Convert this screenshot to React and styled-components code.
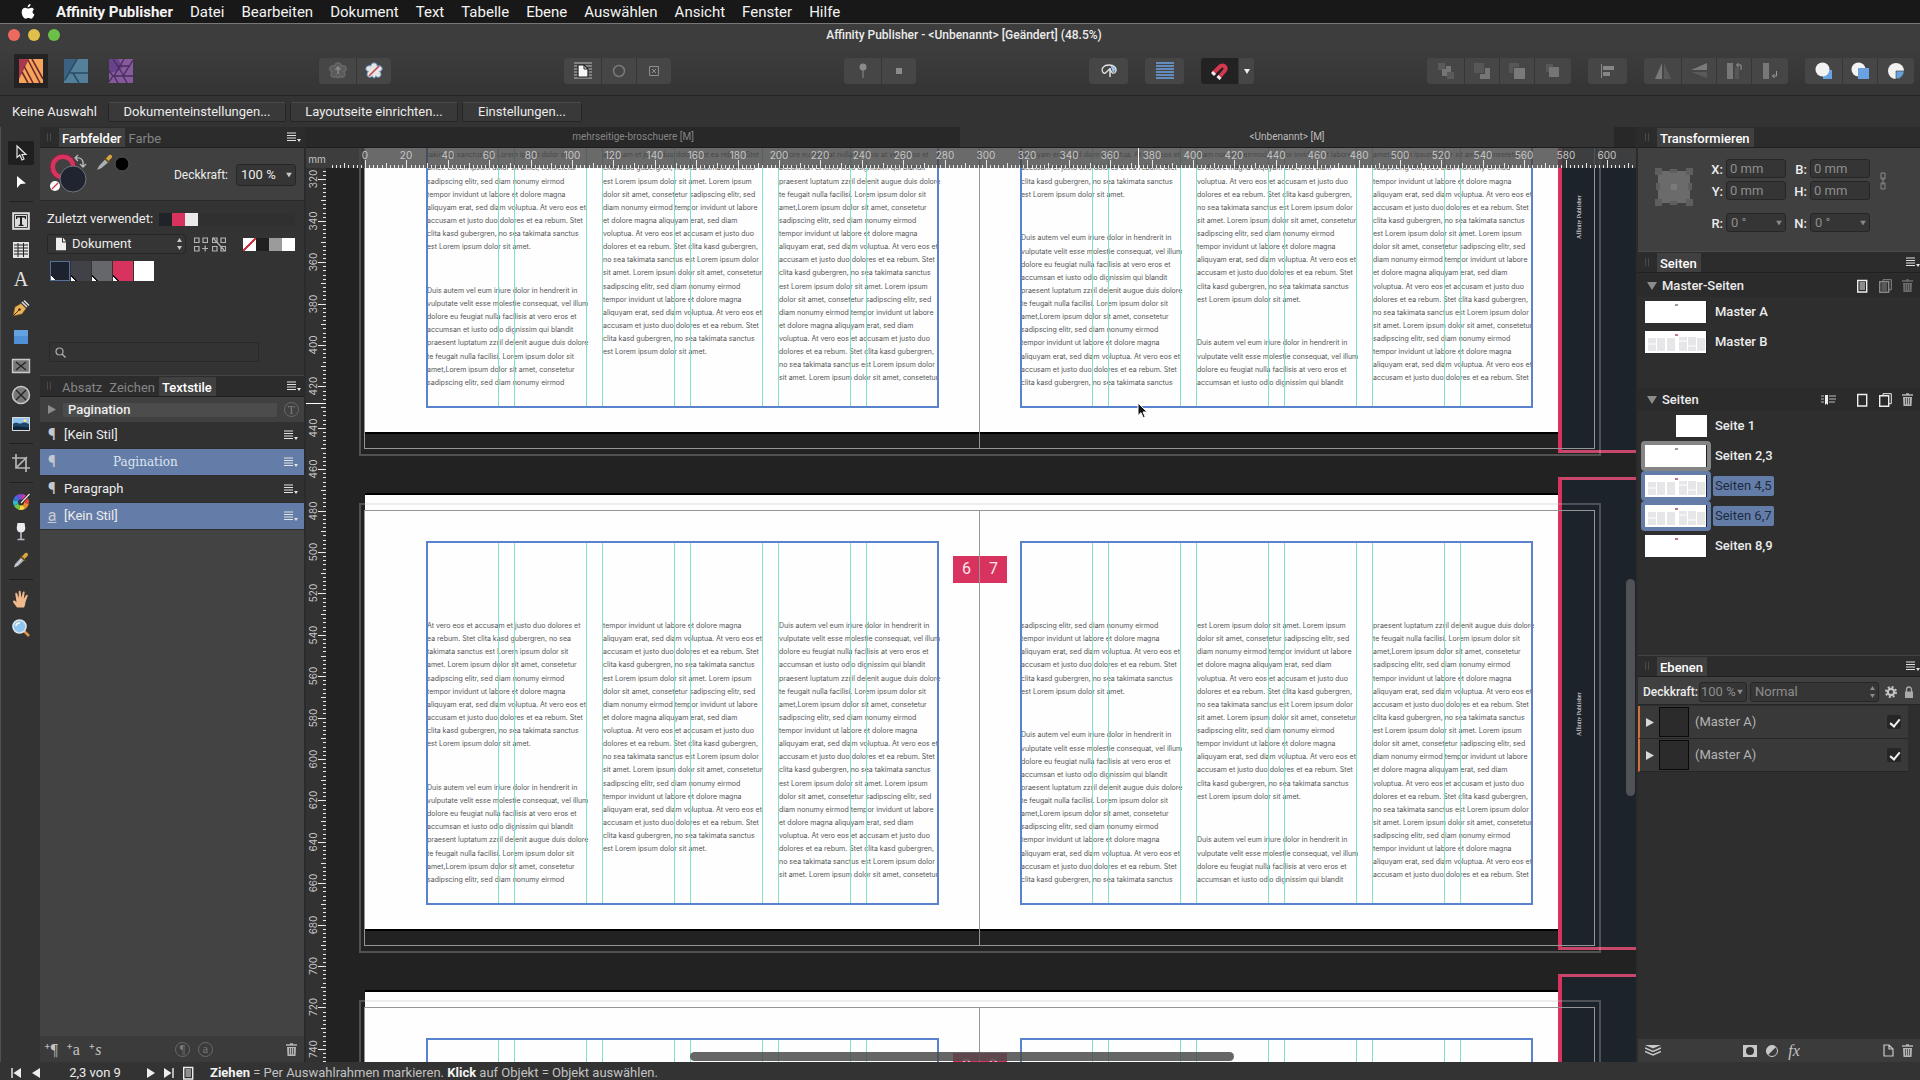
import React from 'react';
import styled, { createGlobalStyle, css } from 'styled-components';

const GlobalStyle = createGlobalStyle`
  * {
    box-sizing: border-box;
  }
  html, body, #root {
    height: 100%;
  }
  body {
    margin: 0;
    overflow: hidden;
    background: #2b2b2b;
    color: #ececec;
    font: 13px/18px Roboto, "Liberation Sans", sans-serif;
  }
  button, input, select {
    margin: 0;
    padding: 0;
    border: 0;
    background: none;
    color: inherit;
    font: inherit;
  }
  svg {
    display: block;
    flex: none;
  }
`;

const Window = styled.div`
  display: flex;
  flex-direction: column;
  height: 100vh;
  min-height: 720px;
`;

/* ---------- top bars ---------- */

const MenuBar = styled.nav`
  display: flex;
  align-items: center;
  gap: 17px;
  height: 23px;
  flex: none;
  padding-left: 21px;
  background: #181818;
  color: #f4f4f4;
  font-size: 15px;
  svg {
    margin-right: 4px;
  }
`;

const MenuItem = styled.button`
  white-space: nowrap;
  font-weight: ${({ $bold }) => ($bold ? 700 : 400)};
`;

const TitleBar = styled.header`
  display: grid;
  grid-template-columns: 1fr auto 1fr;
  align-items: center;
  flex: none;
  height: 24px;
  padding: 0 0 2px 8px;
  border-top: 1px solid #777;
  background: #3d3d3d;
  font-size: 12px;
  font-weight: 500;
`;

const Lights = styled.div`
  display: flex;
  gap: 8px;
`;

const Light = styled.button`
  width: 12px;
  height: 12px;
  border-radius: 50%;
  background: ${({ $color }) => $color};
`;

const Toolbar = styled.div`
  display: flex;
  align-items: center;
  flex: none;
  height: 49px;
  padding: 0 6px 0 14px;
  border-bottom: 1px solid #242424;
  background: linear-gradient(#3d3d3d, #343434);
`;

const Personas = styled.div`
  display: flex;
  align-items: center;
  width: 132px;
`;

const Persona = styled.button`
  display: grid;
  place-items: center;
  flex: none;
  width: 34px;
  height: 34px;
  margin-right: 11px;
  background: ${({ $active }) => ($active ? '#232323' : 'none')};
  opacity: ${({ $active }) => ($active ? 1 : 0.8)};
`;

const Spacer = styled.div`
  flex: 1;
`;

const Cluster = styled.div`
  display: flex;
  gap: 17px;
`;

const Group = styled.div`
  display: flex;
  border-radius: 3px;
  overflow: hidden;
  background: #464646;
`;

const ToolButton = styled.button`
  display: grid;
  place-items: center;
  width: ${({ $width }) => $width || 35}px;
  height: 26px;
  color: ${({ $dim }) => ($dim ? '#686868' : '#e8e8e8')};
  background: ${({ $pressed }) => ($pressed ? '#222' : 'none')};
  & + & {
    border-left: 1px solid #353535;
  }
`;

const ContextBar = styled.div`
  display: flex;
  align-items: center;
  gap: 4px;
  flex: none;
  height: 31px;
  padding: 0 12px;
  background: #333;
`;

const ContextLabel = styled.span`
  width: 92px;
  white-space: nowrap;
`;

const ContextButton = styled.button`
  width: ${({ $width }) => $width}px;
  height: 20px;
  border: 1px solid #252525;
  border-top-color: #4a4a4a;
  border-radius: 2px;
  background: #393939;
  line-height: 18px;
`;

/* ---------- body ---------- */

const Body = styled.main`
  display: flex;
  flex: 1;
  min-height: 0;
  gap: 2px;
`;

const LeftDock = styled.div`
  display: flex;
  flex: none;
  width: 304px;
  background: #333;
`;

const ToolStrip = styled.div`
  display: flex;
  flex-direction: column;
  align-items: center;
  gap: 5px;
  width: 40px;
  padding-top: 14px;
  border-left: 1px solid #505050;
`;

const Tool = styled.button`
  display: grid;
  place-items: center;
  width: 26px;
  height: 24px;
  border-radius: 2px;
  background: ${({ $active }) => ($active ? '#1f1f1f' : 'none')};
`;

const Rule = styled.hr`
  width: 24px;
  height: 1px;
  margin: 2px 0;
  border: 0;
  background: #202020;
`;

const Column = styled.div`
  display: flex;
  flex-direction: column;
  flex: 1;
  min-width: 0;
`;

const TabRow = styled.div`
  display: flex;
  align-items: flex-end;
  flex: none;
  height: 21px;
  padding-right: ${({ $flush }) => ($flush ? 0 : 3)}px;
  border-bottom: 1px solid #1f1f1f;
  background: #2c2c2c;
`;

const Grip = styled.span`
  align-self: center;
  width: 4px;
  height: 8px;
  margin: 0 8px 0 7px;
  border: solid #484848;
  border-width: 0 1px;
`;

const Tab = styled.button`
  height: 19px;
  padding: 2px 4px 0 3px;
  color: ${({ $active }) => ($active ? '#fff' : '#858585')};
  background: ${({ $active }) => ($active ? '#404040' : 'none')};
  font-weight: ${({ $active }) => ($active ? 500 : 400)};
  line-height: 17px;
`;

const MenuButton = styled.button`
  margin-left: auto;
  align-self: center;
`;

const field = css`
  border: 1px solid #262626;
  border-radius: 3px;
  background: #353535;
`;

const SelectBox = styled.span`
  position: relative;
  display: block;
  width: ${({ $width }) => $width}px;
  height: ${({ $height }) => $height || 20}px;
  select {
    ${field}
    width: 100%;
    height: 100%;
    padding-left: ${({ $indent }) => $indent || 4}px;
    appearance: none;
    opacity: 1;
    color: ${({ $dim }) => ($dim ? '#8d8d8d' : '#ececec')};
  }
  svg {
    position: absolute;
    right: 4px;
    top: 50%;
    transform: translateY(-50%);
    pointer-events: none;
  }
  svg:nth-of-type(2) {
    right: auto;
    left: 9px;
  }
`;

const ColorBox = styled.div`
  display: flex;
  align-items: center;
  flex: none;
  height: 53px;
  padding: 1px 8px 0 7px;
  border-bottom: 1px solid #2a2a2a;
  background: #404040;
  label {
    margin: 0 8px 0 auto;
    font-size: 12px;
    font-weight: 400;
  }
`;

const SwatchPanel = styled.div`
  display: flex;
  flex-direction: column;
  flex: none;
  height: 175px;
  padding: 9px 9px 13px 7px;
  border-bottom: 1px solid #444;
`;

const Recent = styled.div`
  display: flex;
  align-items: center;
  gap: 6px;
  height: 18px;
`;

const RecentStrip = styled.div`
  display: flex;
  flex: 1;
  background: #303030;
`;

const SourceRow = styled.div`
  display: flex;
  align-items: center;
  height: 20px;
  margin-top: 6px;
  > svg {
    margin-left: 8px;
  }
  > svg + svg {
    margin-left: 4px;
  }
`;

const Strip = styled.div`
  display: flex;
  margin-left: auto;
`;

const Swatch = styled.button`
  width: 13px;
  height: 13px;
  background: ${({ $fill }) => $fill};
`;

const SwatchList = styled.div`
  display: flex;
  gap: 1px;
  padding: 7px 0 0 3px;
`;

const BigSwatch = styled.button`
  width: 20px;
  height: 20px;
  border: ${({ $active }) => ($active ? '1px solid #56709c' : '0')};
  background: ${({ $global }) => ($global
    ? 'linear-gradient(45deg, #fff 12%, #111 12%, #111 16%, transparent 16%), '
    : '')}linear-gradient(${({ $fill }) => `${$fill}, ${$fill}`});
`;

const SearchBox = styled.label`
  display: flex;
  align-items: center;
  width: 210px;
  height: 20px;
  margin: auto 0 0 2px;
  padding-left: 5px;
  border: 1px solid #292929;
  input {
    flex: 1;
    min-width: 0;
    outline: none;
  }
`;

const StyleHead = styled.div`
  display: flex;
  align-items: center;
  flex: none;
  height: 25px;
  padding: 0 5px 0 8px;
  background: #404040;
  gap: 7px;
  input {
    flex: 1;
    min-width: 0;
    height: 14px;
    padding-left: 5px;
    background: #4c4c4c;
    font-weight: 500;
  }
`;

const StyleList = styled.ul`
  flex: 1;
  margin: 0;
  padding: 0;
  list-style: none;
  background: #434343;
`;

const StyleRow = styled.li`
  display: flex;
  align-items: center;
  height: 27px;
  padding: 0 6px 0 6px;
  border-bottom: 1px solid #2d2d2d;
  background: ${({ $active }) => ($active ? '#647da8' : '#313131')};
`;

const StyleMark = styled.span`
  width: 12px;
  margin-right: 6px;
  color: #c4c9d0;
  font-size: 16px;
  text-align: center;
  text-decoration: ${({ $char }) => ($char ? 'underline' : 'none')};
`;

const StyleName = styled.span`
  flex: 1;
  ${({ $slab }) => $slab && css`
    padding-left: 49px;
    color: #dfe5ef;
    font: 12px/18px "DejaVu Serif", serif;
  `}
`;

const DockFooter = styled.div`
  display: flex;
  align-items: center;
  flex: none;
  height: ${({ $height }) => $height}px;
  padding: 0 7px 0 ${({ $indent }) => $indent || 4}px;
  gap: 8px;
  background: #3b3b3b;
  color: #c4c4c4;
`;

const GlyphButton = styled.button`
  width: ${({ $ring }) => ($ring ? 15 : 14)}px;
  height: ${({ $ring }) => ($ring ? 15 : 18)}px;
  border: ${({ $ring }) => ($ring ? '1px solid #6a6a6a' : '0')};
  border-radius: 50%;
  color: ${({ $ring }) => ($ring ? '#7c7c7c' : '#c4c4c4')};
  font: ${({ $italic }) => ($italic ? 'italic' : 'normal')} ${({ $ring }) => ($ring ? 12 : 16)}px/12px "Liberation Serif", serif;
  white-space: nowrap;
  sup {
    font: 10px/8px Inter, sans-serif;
  }
`;

/* ---------- document area ---------- */

const DocTabs = styled.div`
  display: flex;
  flex: none;
  height: 21px;
  padding-right: 22px;
  border-bottom: 1px solid #1d1d1d;
  background: #282828;
`;

const DocTab = styled.button`
  flex: 1;
  color: ${({ $active }) => ($active ? '#bdbdbd' : '#858585')};
  background: ${({ $active }) => ($active ? '#333' : 'none')};
  font-size: 10px;
  line-height: 20px;
`;

const Workspace = styled.section`
  position: relative;
  flex: 1;
  min-height: 0;
  overflow: hidden;
  background: #222;
`;

const Board = styled.div`
  display: flex;
  flex-direction: column;
  gap: 21px;
  margin-top: -168px;
  padding-left: 53px;
`;

const SpreadBox = styled.article`
  position: relative;
  flex: none;
  height: 476px;
`;

const Paper = styled.div`
  position: absolute;
  left: 6px;
  top: 18px;
  width: 1193px;
  height: 434px;
  background: #fefefe;
  box-shadow: 0 2px 0 #000, 0 -2px 0 #000;
`;

const Cover = styled.div`
  position: absolute;
  left: 1199px;
  right: 0;
  top: 0;
  height: 473px;
  border: solid #d8325f;
  border-width: 3px 0 3px 4px;
  border-top-color: #c9476b;
  border-bottom-color: #c9476b;
  background: #1d232b;
`;

const CoverTitle = styled.span`
  position: absolute;
  right: 51px;
  top: 212px;
  height: 44px;
  color: #f2f3f4;
  font: 6px/12px "Liberation Serif", serif;
  white-space: nowrap;
  writing-mode: vertical-rl;
  rotate: 180deg;
`;

const Bleed = styled.div`
  position: absolute;
  left: 0;
  top: 26px;
  width: 1242px;
  height: 450px;
  border: 2px solid rgba(195, 195, 195, 0.29);
`;

const Trim = styled.div`
  position: absolute;
  left: 5px;
  top: 33px;
  width: 1231px;
  height: 436px;
  border: 1px solid #959595;
  &::after {
    content: '';
    position: absolute;
    left: 614px;
    top: 0;
    bottom: 0;
    border-left: 1px solid #959595;
  }
`;

const PageFrame = styled.div`
  position: absolute;
  left: ${({ $right }) => ($right ? 661 : 67)}px;
  top: 64px;
  width: 513px;
  height: 364px;
`;

const Guides = styled.div`
  position: absolute;
  inset: 0;
  display: grid;
  grid-template-columns: repeat(6, 1fr);
  column-gap: 15px;
  i {
    border: solid #7fe3cb;
    border-width: 0 1px;
  }
  &::after {
    content: '';
    position: absolute;
    inset: 0;
    border: 2px solid #5a83cd;
  }
`;

const Story = styled.div`
  display: grid;
  grid-template-columns: repeat(3, minmax(0, 1fr));
  column-gap: 16px;
  padding: 78px 0 0 1px;
`;

// baseline grid: a line takes 3 units, the space between paragraphs 7
const StoryColumn = styled.div`
  display: grid;
  grid-template-rows: repeat(61, 1fr);
  height: 267px;
  color: #555;
  font: 7px/13px Inter, sans-serif;
  white-space: nowrap;
`;

const Line = styled.span`
  grid-row: span 3;
  height: 0;
`;

const Gap = styled.span`
  grid-row: span 7;
`;

const Folio = styled.div`
  position: absolute;
  left: 594px;
  top: 79px;
  display: grid;
  grid-template-columns: 1fr 1fr;
  width: 54px;
  height: 27px;
  background: #d8325f;
  color: #fbe6ec;
  font: 16px/26px Roboto, sans-serif;
  text-align: center;
`;

const TopRuler = styled.div`
  position: absolute;
  left: 0;
  right: 0;
  top: 0;
  height: 20px;
  overflow: hidden;
  background: rgba(69, 69, 69, 0.8);
`;

const SideRuler = styled.div`
  position: absolute;
  left: 0;
  top: 20px;
  bottom: 0;
  width: 20px;
  overflow: hidden;
  background: #323232;
`;

const RulerDrawing = styled.svg`
  width: 100%;
  height: 100%;
  fill: #c6c6c6;
  font: 10px Inter, sans-serif;
  text-anchor: middle;
  shape-rendering: crispEdges;
`;

const ScrollThumb = styled.div`
  position: absolute;
  border-radius: 5px;
  ${({ $vertical }) => ($vertical
    ? 'right: 1px; top: 431px; width: 9px; height: 217px; background: #505255;'
    : 'left: 384px; bottom: 1px; width: 544px; height: 9px; background: rgba(75, 75, 75, 0.85);')}
`;

const Pointer = styled.svg`
  position: absolute;
  left: 831px;
  top: 254px;
`;

/* ---------- right dock ---------- */

const RightDock = styled.aside`
  display: flex;
  flex-direction: column;
  flex: none;
  width: 282px;
  background: #2e2e2e;
`;

const Transform = styled.form`
  display: flex;
  flex: none;
  height: 104px;
  padding: 11px 30px 0 17px;
  border-bottom: 1px solid #4a4a4a;
  background: #404040;
`;

const Anchor = styled.div`
  width: 54px;
  padding-top: 9px;
`;

const Fields = styled.div`
  display: grid;
  grid-template-columns: 17px 60px 24px 60px;
  grid-template-rows: 22px 22px 10px 20px;
  align-items: start;
  label {
    padding: 2px 3px 0 0;
    text-align: right;
    font-weight: 500;
  }
  input {
    ${field}
    width: 60px;
    height: 19px;
    padding-left: 3px;
    color: #8d8d8d;
  }
`;

const FieldBreak = styled.span`
  grid-column: 1 / -1;
`;

const Chain = styled.div`
  padding: 13px 0 0 10px;
`;

const SectionHead = styled.h2`
  display: flex;
  align-items: center;
  height: 23px;
  margin: 0;
  padding: 0 7px 0 9px;
  background: #2b2b2b;
  font-size: 13px;
  font-weight: 500;
  > svg {
    margin-right: 5px;
  }
`;

const SectionTools = styled.div`
  display: flex;
  align-items: center;
  gap: 10px;
  margin-left: auto;
`;

const PageList = styled.ul`
  margin: 0;
  padding: 0 0 0 3px;
  list-style: none;
`;

const PageRow = styled.li`
  display: flex;
  align-items: center;
  height: 30px;
`;

const ringColors = { current: '#858585', selected: '#647da8' };

const ThumbRing = styled.span`
  display: flex;
  justify-content: flex-end;
  width: 70px;
  height: 30px;
  padding: 4px;
  border-radius: 4px;
  background: ${({ $state }) => ringColors[$state] || 'none'};
`;

const Thumb = styled.span`
  position: relative;
  width: ${({ $single }) => ($single ? 31 : 62)}px;
  height: 22px;
  border-right: ${({ $single }) => ($single ? '0' : '1px solid #1d232b')};
  background: #fff;
`;

const PageName = styled.span`
  margin-left: 2px;
  padding: 1px 2px;
  border-radius: 2px;
  font-weight: 500;
  ${({ $selected }) => $selected && 'background: #647da8; color: #1e2a40; font-weight: 400;'}
`;

const PagesBlock = styled.div`
  flex: none;
  height: ${({ $height }) => $height}px;
  padding-top: 1px;
  border-bottom: ${({ $last }) => ($last ? '1px solid #444' : '0')};
`;

const LayerControls = styled.div`
  display: flex;
  align-items: center;
  gap: 3px;
  flex: none;
  height: 28px;
  padding: 2px 7px 0 5px;
  border-bottom: 1px solid #262626;
  background: #404040;
  label {
    width: 53px;
    font-size: 12px;
    font-weight: 500;
    white-space: nowrap;
  }
  > svg {
    margin: 0 1px 0 auto;
  }
  > svg:last-child {
    margin-left: 4px;
    margin-right: 0;
  }
`;

const Layers = styled.ul`
  flex: 1;
  margin: 0;
  padding: 1px 12px 0 0;
  list-style: none;
`;

const Layer = styled.li`
  display: flex;
  align-items: center;
  height: 33px;
  padding: 0 7px 0 6px;
  border-bottom: 1px solid #262626;
  border-left: 2px solid #d0713a;
  background: #393939;
  color: #b4b4b4;
  label {
    flex: 1;
    padding-left: 6px;
  }
`;

const LayerThumb = styled.span`
  width: 30px;
  height: 30px;
  margin-left: 5px;
  border: 1px solid #0a0a0a;
  background: #2b2b2b;
`;

const Tick = styled.input`
  position: relative;
  width: 14px;
  height: 14px;
  appearance: none;
  border-radius: 2px;
  background: #262626;
  &:checked::after {
    content: '';
    position: absolute;
    left: 5px;
    top: 2px;
    width: 4px;
    height: 8px;
    border: solid #f0f0f0;
    border-width: 0 2px 2px 0;
    rotate: 40deg;
  }
`;

const StatusBar = styled.footer`
  display: flex;
  align-items: center;
  flex: none;
  height: 18px;
  padding: 3px 10px 0;
  background: #333;
  color: #c2c2c2;
  white-space: nowrap;
  b {
    color: #f2f2f2;
  }
`;

const NavButton = styled.button`
  display: grid;
  place-items: center;
  width: ${({ $width }) => $width || 20}px;
`;

const PageCount = styled.span`
  width: 95px;
  padding-right: 5px;
  color: #ececec;
  text-align: center;
`;

const Hint = styled.span`
  padding-left: 13px;
`;

/* ---------- icons ---------- */

const Svg = ({ w = 20, h = w, children, ...rest }) => (
  <svg width={w} height={h} viewBox={`0 0 ${w} ${h}`} fill="none" aria-hidden="true" {...rest}>
    {children}
  </svg>
);

const Apple = () => (
  <Svg w={14} h={16} fill="#fff">
    <path d="M9.6 0c.1 1.700-1.300 3.300-3 3.300C6.400 1.700 7.900.2 9.600 0zM12.900 5.400c-1.900 1.200-1.700 4.100.5 5-.6 1.900-2 4.300-3.400 4.300-1 0-1.400-.6-2.600-.6s-1.700.6-2.600.6C3 14.700.7 11.200.7 8.200c0-2.900 1.800-4.400 3.600-4.400 1.200 0 2.100.8 2.900.8s1.900-.9 3.300-.9c1 0 1.900.7 2.400 1.700z" />
  </Svg>
);

const MenuIcon = () => (
  <Svg w={15} h={10}>
    <path d="M1 1h9M1 3.500h9M1 6h9M1 8.500h9" stroke="#e2e2e2" strokeWidth="1.200" />
    <path d="M11 7h4l-2 3z" fill="#e2e2e2" />
  </Svg>
);

const Down = ({ color = '#c8c8c8' }) => (
  <Svg w={6} h={5}><path d="M0 0h6L3 5z" fill={color} /></Svg>
);

const UpDown = ({ color = '#c8c8c8' }) => (
  <Svg w={5} h={12}><path d="M0 4h5L2.500 0zM0 8h5l-2.500 4z" fill={color} /></Svg>
);

const Tri = ({ dir = 'right', w = 9, h = 9, color = '#8c8c8c' }) => {
  const d = { right: `M0 0v${h}L${w} ${h / 2}z`, left: `M${w} 0v${h}L0 ${h / 2}z`, down: `M0 0h${w}L${w / 2} ${h}z` };
  return <Svg w={w} h={h}><path d={d[dir]} fill={color} /></Svg>;
};

const Trash = ({ color = '#b5b5b5' }) => (
  <Svg w={11} h={13}>
    <path d="M0 2h11M4 1h3" stroke={color} strokeWidth="1.500" />
    <path d="M1 4h9l-.5 9h-8z" fill={color} />
    <path d="M3.500 5v6.500M5.500 5v6.500M7.500 5v6.500" stroke="#444" strokeWidth=".8" />
  </Svg>
);

const Dropper = () => (
  <Svg w={18} h={18}>
    <path d="M2 16.500 3 13l6-6.500 3 3L6 15z" fill="#aab0b5" />
    <path d="M3 15.500 9.500 8.500" stroke="#eee" />
    <path d="m8 5.500 5 5 1.200-1.300-5-5z" fill="#6b4a12" />
    <path d="M10 5.500 12.500 2.500c2-2.300 5 .7 2.800 2.800L12.500 8z" fill="#d9a541" />
  </Svg>
);

const PersonaPublisher = () => (
  <Svg w={24}>
    <path d="M0 0h24v24H0z" fill="#f6a45c" />
    <path d="M0 0h10L0 20z" fill="#a8384d" />
    <path d="M9 1 21 24M5 7l9 17M3 13l6 11M13 0l11 20" stroke="#6e2b2b" strokeWidth="1.600" />
  </Svg>
);

const PersonaDesigner = () => (
  <Svg w={24}>
    <path d="M0 0h24v24H0z" fill="#5a92b4" />
    <path d="M0 0h14L1 22H0z" fill="#3d6c96" />
    <path d="M13 0 1 21M9 14l6 10M6 14h18" stroke="#27506f" strokeWidth="1.500" />
  </Svg>
);

const PersonaPhoto = () => (
  <Svg w={24}>
    <path d="M0 0h24v24H0z" fill="#9a63b4" />
    <path d="M0 0h9l5 8-5 4-9 2z" fill="#7446a0" />
    <path d="M4 0l11 17M15 0 5 17H24M24 1 14 17l4 7M0 12l4 5-4 6M5 17l4 7M8 7h13" stroke="#4b2a68" strokeWidth="1.300" />
  </Svg>
);

const flower = 'M9 1c2 0 3 1.200 3 3 2-.6 4.500 0 5 2 .4 1.800-.8 3-2.500 3.400C16 11 16.500 13 15 14.500c-1.500 1.300-3.300.8-4.300-.7-.3 2.700-3 2.700-3.400 0-1 1.500-2.800 2-4.300.7C1.500 13 2 11 3.500 9.400 1.800 9 .6 7.800 1 6c.5-2 3-2.600 5-2 0-1.800 1-3 3-3z';

const FlowerUp = () => (
  <Svg w={18}>
    <path d={flower} stroke="currentColor" strokeWidth="1.500" fill="#5a5a5a" />
    <path d="M9 5v7M6.500 8 9 5l2.500 3" stroke="#8a8a8a" strokeWidth="1.500" />
  </Svg>
);

const FlowerOff = () => (
  <Svg w={18}>
    <path d={flower} stroke="#7da9d8" fill="#e6e6e6" />
    <path d="M4 14 14 4" stroke="#c8454a" strokeWidth="1.600" />
  </Svg>
);

const WrapPage = () => (
  <Svg w={18}>
    <path d="M0 1h18M0 4h18M0 7h18M0 10h18M0 13h18M0 16h18" stroke="#bcbcbc" />
    <path d="M4 3h6l4 4v8H4z" fill="#f6f6f6" stroke="#222" strokeWidth="1.200" />
    <path d="M10 3v4h4" stroke="#222" />
  </Svg>
);

const Oval = () => <Svg w={14}><circle cx="7" cy="7" r="5.500" stroke="#7a7a7a" strokeWidth="1.500" /></Svg>;

const BoxX = () => (
  <Svg w={12}><path d="M1.500 1.500h9v9h-9zM4 4l4 4M8 4 4 8" stroke="#8e8e8e" /></Svg>
);

const PinIcon = () => (
  <Svg w={10} h={16}><circle cx="5" cy="4" r="3.500" fill="#8b8b8b" /><path d="M5 7v8" stroke="#8b8b8b" /></Svg>
);

const Dot = () => <Svg w={6}><path d="M0 0h6v6H0z" fill="#8b8b8b" /></Svg>;

const Preview = () => (
  <Svg w={18} h={16}>
    <path d="M3 9.500C.5 5 4 2 9 2s8.500 3 6.500 7c-1 1.500-2.500 1.500-3.500.5L9.500 6 6 9.500c-1 1-2.200 1-3 0z" stroke="#e2e2e2" strokeWidth="1.300" />
    <path d="M10.500 3c3.500 0 5.500 2 4 5.500L13 9.500z" fill="#9cc3ea" />
    <path d="M10 5v9" stroke="#e2e2e2" strokeWidth="1.500" />
  </Svg>
);

const Baseline = () => (
  <Svg w={18}><path d="M0 1h18M0 4h18M0 7h18M0 10h18M0 13h18M0 16h18" stroke="#6ea4e6" strokeWidth="1.600" /></Svg>
);

const Magnet = () => (
  <Svg w={18}>
    <path d="M2.500 11 9 4.500c3-3 7.500 1 4.500 4.500L8 15.500" stroke="#d33850" strokeWidth="4" />
    <path d="m1 10 3 3M6.500 14l3 3" stroke="#f0f0f0" strokeWidth="3" />
  </Svg>
);

const Arrange = ({ kind }) => (
  <Svg w={18}>
    {kind === 0 && <path d="M1 1h7v7H1zM10 10h7v7h-7z" fill="#5a5a5a" />}
    {kind === 0 && <path d="M5 7h4V4h5v6h-4v4H5z" fill="#757575" />}
    {kind === 1 && <path d="M1 1h10v10H1z" fill="#575757" />}
    {kind === 1 && <path d="M12 6h5v11H7v-5h5z" fill="#757575" />}
    {kind === 2 && <path d="M1 1h10v4H5v6H1z" fill="#575757" />}
    {kind === 2 && <path d="M6 6h11v11H6z" fill="#7a7a7a" />}
    {kind === 3 && <path d="M2 2h7v3H5v5H2z" fill="#575757" />}
    {kind === 3 && <path d="M5 5h10v10H5z" fill="#757575" />}
  </Svg>
);

const Align = () => (
  <Svg w={16}><path d="M1.500 1v14" stroke="#888" /><path d="M3 3h11v4H3zM3 9h7v4H3z" fill="#858585" /></Svg>
);

const Flip = ({ kind }) => (
  <Svg w={18}>
    {kind === 0 && <><path d="M8 1v16H1z" fill="#7a7a7a" /><path d="M10 1v16h7z" fill="#5a5a5a" /></>}
    {kind === 1 && <><path d="M17 1v7H1z" fill="#7a7a7a" /><path d="M17 16v-6H1z" fill="#5a5a5a" /></>}
    {kind > 1 && <path d="M2 1h6v16H2z" fill="#787878" />}
    {kind === 2 && <path d="M10 5h4v12h-4z" fill="#565656" />}
    {kind === 2 && <path d="M16 8V3h-4M13.500 1l-2 2 2 2" stroke="#999" />}
    {kind === 3 && <path d="M15.500 9v5h-4M13.500 12l-2 2 2 2" stroke="#999" />}
  </Svg>
);

const Insert = ({ kind }) => (
  <Svg w={18}>
    {kind === 0 && <><path d="M8 8h9v9H8z" fill="#68a2e0" /><circle cx="7.500" cy="7.500" r="7" fill="#f2f2f2" /></>}
    {kind === 1 && <><circle cx="7.500" cy="7.500" r="7" fill="#f2f2f2" /><path d="M7 6h11v11H7z" fill="#68a2e0" /></>}
    {kind === 2 && <><circle cx="9" cy="9" r="8" fill="#f2f2f2" /><path d="M9 9h8a8 8 0 0 1-8 8z" fill="#68a2e0" stroke="#333" strokeWidth=".6" /></>}
  </Svg>
);

const tools = [
  { label: 'Verschieben', active: true, icon: <path d="M6 3v11.500l2.800-2.500 2.200 5 2-1-2-4.500h4z" fill="#222" stroke="#e6e6e6" strokeWidth="1.200" /> },
  { label: 'Knoten', icon: <path d="M6 4v12l3.500-4 5.500-.5z" fill="#fff" /> },
  null,
  {
    label: 'Rahmentext',
    icon: (
      <>
        <path d="M1.500 1.500h17v17h-17z" fill="#dcdcdc" stroke="#bbb" />
        <path d="M3.500 3.500h13v13h-13z" stroke="#444" />
        <path d="M5 5h10v3h-1l-.5-1.500H11v7l1.500.5v1h-5v-1l1.500-.5v-7H6.500L6 8H5z" fill="#222" />
      </>
    ),
  },
  { label: 'Tabelle', icon: <><path d="M2 2h16v16H2z" fill="#e4e4e4" /><path d="M3 5h14M3 8h14M3 11h14M3 14h14M7 3v14M12.500 3v14" stroke="#222" /></> },
  { label: 'Grafiktext', icon: <text x="10" y="17" textAnchor="middle" fill="#e4e4e4" fontFamily="Liberation Serif, serif" fontSize="20">A</text> },
  {
    label: 'Stift',
    icon: (
      <>
        <path d="m2 18 2-9 6-3.500 5 5L11 16z" fill="#eab45c" stroke="#7a5214" strokeWidth=".6" />
        <path d="m2 18 6-6" stroke="#4a300c" />
        <circle cx="8.500" cy="11.500" r="1.300" fill="#4a300c" />
        <path d="m11 4 5 5M13 2.500l5 5" stroke="#d9d9d9" strokeWidth="1.600" />
      </>
    ),
  },
  { label: 'Rechteck', icon: <><path d="M3 3h14v14H3z" fill="#4f90d6" /><path d="M3 3h14v6H3z" fill="#65a2e2" /></> },
  { label: 'Bildrahmen rechteckig', icon: <><path d="M1.500 3.500h17v13h-17z" fill="#777" stroke="#c9c9c9" strokeWidth="1.400" /><path d="m5 6 10 8M15 6 5 14" stroke="#222" strokeWidth="1.200" /></> },
  { label: 'Bildrahmen oval', icon: <><circle cx="10" cy="10" r="8.500" fill="#777" stroke="#c9c9c9" strokeWidth="1.500" /><path d="m5 5 10 10M15 5 5 15" stroke="#222" strokeWidth="1.300" /></> },
  {
    label: 'Bild platzieren',
    icon: (
      <>
        <path d="M1.500 3.500h17v13h-17z" fill="#8fc4ee" stroke="#ddd" />
        <path d="M2 10c4-3 6 1 9-1 3-1 5 0 7 1v6H2z" fill="#1d4668" />
        <path d="M2 13c5-2 9 1 16 0v3H2z" fill="#0f2437" />
        <circle cx="14" cy="6.500" r="1.500" fill="#ffe28a" />
      </>
    ),
  },
  null,
  { label: 'Beschneiden', icon: <path d="M5 1v14h14M1 5h14v14M16 4 6 14" stroke="#b6b6b6" strokeWidth="1.700" /> },
  null,
  { label: 'Farbverlauf', wheel: true },
  {
    label: 'Transparenz',
    icon: (
      <>
        <path d="M6.500 2h7l.8 5c0 3-2 4.500-4.300 4.500S5.700 10 5.700 7z" fill="#ececf0" />
        <path d="M10 11v7M6.500 18.500h7" stroke="#b9bcc8" strokeWidth="1.600" />
      </>
    ),
  },
  { label: 'Pipette', dropper: true },
  null,
  {
    label: 'Ansicht verschieben',
    icon: <path d="M6 18.500c-1-2-4-4.500-4-6 0-1.500 2-1.500 3.500.8L4.300 5c-.2-1.500 1.500-1.700 1.900-.3L7.800 9 7.700 2.800c0-1.500 1.900-1.500 2 0l.6 6 1.500-5.500c.4-1.300 2.100-1 1.800.5l-.8 6 2.200-3.600c.8-1.200 2.200-.3 1.600 1L14.500 13c-.3 3-.8 4-1.500 5.500z" fill="#f0b98d" />,
  },
  {
    label: 'Zoom',
    icon: (
      <>
        <path d="m13 13 5 5" stroke="#d9924a" strokeWidth="2.600" />
        <circle cx="8.500" cy="8.500" r="6.500" fill="#8ec6f0" stroke="#dfe6ec" strokeWidth="1.600" />
        <path d="M5 8c0-2 2-3.500 4-3" stroke="#fff" strokeWidth="1.500" />
      </>
    ),
  },
];

const Wheel = () => (
  <Svg w={20}>
    {['#e8443a', '#f08c2e', '#f4d93c', '#6cc648', '#35b6c4', '#3b6fe0', '#8a45d2', '#dd3fa8'].map((c, i) => (
      <path key={c} d="M10 10 10 2A8 8 0 0 1 15.700 4.300z" fill={c} transform={`rotate(${i * 45 + 60} 10 10)`} />
    ))}
    <circle cx="10" cy="10.500" r="3" fill="#333" />
    <path d="m10 11 8.500-9" stroke="#222" strokeWidth="3" />
    <path d="m10 11 8.500-9" stroke="#e6e6e6" strokeWidth="1.300" />
  </Svg>
);

const ColorWells = () => (
  <Svg w={86} h={48}>
    <circle cx="16" cy="16" r="10.500" stroke="#d8325f" strokeWidth="5" />
    <circle cx="16" cy="16" r="13" stroke="#7a2540" />
    <circle cx="26" cy="28" r="13" fill="#1f2430" stroke="#70757c" />
    <circle cx="8" cy="35" r="5" fill="#fff" />
    <path d="m5 38 6-6" stroke="#d0333f" strokeWidth="1.300" />
    <path d="M29 7c5-1 8 2 7 8M31 4l-3 3 3 3M33 13l3 3 3-3" stroke="#b9b9b9" strokeWidth="1.300" />
    <g transform="translate(49 2)">
      <path d="M1 17 3 13l6-6.500 3 3L5.500 15z" fill="#aab0b5" />
      <path d="m8 5.500 5 5 1.200-1.300-5-5z" fill="#6b4a12" />
      <path d="M10 5.500 12.500 2.500c2-2.300 5 .7 2.800 2.800L12.500 8z" fill="#d9a541" />
    </g>
    <circle cx="75" cy="13" r="7" fill="#000" stroke="#555" />
  </Svg>
);

const SwatchGrid = ({ cut }) => (
  <Svg w={14} h={15}>
    <path d="M.5 1h4.500v4.500H.5zM.5 9.500h4.500V14H.5z" stroke="#b4b4b4" strokeWidth="1.200" />
    {cut
      ? <path d="M9 9.500h4.500V14H9zM9 1h4.500v4.500H9zM1 1l12 13" stroke="#b4b4b4" strokeWidth="1.200" />
      : <path d="M9 1h4.500v4.500H9zM11.200 8.500v6M8.200 11.500h6" stroke="#b4b4b4" strokeWidth="1.200" />}
  </Svg>
);

const Lens = () => (
  <Svg w={11}><circle cx="4.500" cy="4.500" r="3.500" stroke="#aaa" strokeWidth="1.200" /><path d="m7 7 3.500 3.500" stroke="#aaa" strokeWidth="1.400" /></Svg>
);

const DocIcon = () => <Svg w={10} h={13}><path d="M0 0h6v5h4v8H0z" fill="#eee" /><path d="m7 0 3 4H7z" fill="#eee" /></Svg>;

const Sheet = ({ color = '#eee', lines, stacked }) => (
  <Svg w={13} h={14}>
    {stacked && <path d="M4 2.500V.7h8.300v10H10" stroke={color} />}
    <path d={stacked ? 'M.7 2.700h9v10.600h-9z' : 'M1.700 1.500h9v11.500h-9z'} stroke={color} strokeWidth="1.400" />
    {lines && <path d={stacked ? 'M2.500 5h5.500M2.500 7h5.500M2.500 9h5.500M2.500 11h5.500' : 'M3.500 4h5.500M3.500 6h5.500M3.500 8h5.500M3.500 10h5.500'} stroke={color} />}
  </Svg>
);

const SectionIcon = () => (
  <Svg w={15} h={10}>
    <path d="M0 1h3M0 4h3M0 7h3M8 1h7M8 4h7M8 7h6" stroke="#bbb" />
    <path d="M4 0h3v10L5.500 8.500 4 10z" fill="#eee" />
  </Svg>
);

const AnchorGrid = () => (
  <Svg w={38} h={38}>
    <path d="M3 3h32v32H3z" fill="#6b6b6b" />
    <path d="M0 0h7v7H0zM31 0h7v7h-7zM0 31h7v7H0zM31 31h7v7h-7zM15 1h7v4h-7zM15 33h7v4h-7zM1 15h4v7H1zM33 15h4v7h-4z" fill="#5e5e5e" />
    <path d="M16 16h6v6h-6z" fill="#7a7a7a" />
  </Svg>
);

const ChainIcon = () => (
  <Svg w={6} h={18}><path d="M1 1h4v6H1zM1 11h4v6H1zM3 5v8" stroke="#888" /></Svg>
);

const Gear = () => (
  <Svg w={12}>
    <circle cx="6" cy="6" r="3.200" stroke="#c4c4c4" strokeWidth="2.200" />
    <circle cx="6" cy="6" r="5" stroke="#c4c4c4" strokeWidth="2" strokeDasharray="2 1.930" />
  </Svg>
);

const Lock = () => (
  <Svg w={8} h={12}><path d="M1.500 6V3.500a2.500 2.500 0 0 1 5 0V6" stroke="#aaa" strokeWidth="1.300" /><path d="M0 5.500h8V12H0z" fill="#aaa" /></Svg>
);

/* ---------- document text ---------- */

const duis = [
  'Duis autem vel eum iriure dolor in hendrerit in',
  'vulputate velit esse molestie consequat, vel illum',
  'dolore eu feugiat nulla facilisis at vero eros et',
  'accumsan et iusto odio dignissim qui blandit',
  'praesent luptatum zzril delenit augue duis dolore',
  'te feugait nulla facilisi. Lorem ipsum dolor sit',
  'amet,Lorem ipsum dolor sit amet, consetetur',
];

const elitr = [
  'sadipscing elitr, sed diam nonumy eirmod',
  'tempor invidunt ut labore et dolore magna',
  'aliquyam erat, sed diam voluptua. At vero eos et',
  'accusam et justo duo dolores et ea rebum. Stet',
  'clita kasd gubergren, no sea takimata sanctus',
];

const dolor = [
  'est Lorem ipsum dolor sit amet. Lorem ipsum',
  'dolor sit amet, consetetur sadipscing elitr, sed',
  'diam nonumy eirmod tempor invidunt ut labore',
  'et dolore magna aliquyam erat, sed diam',
  'voluptua. At vero eos et accusam et justo duo',
  'dolores et ea rebum. Stet clita kasd gubergren,',
  'no sea takimata sanctus est Lorem ipsum dolor',
  'sit amet. Lorem ipsum dolor sit amet, consetetur',
];

const ending = 'est Lorem ipsum dolor sit amet.';

const vero = [
  'At vero eos et accusam et justo duo dolores et',
  'ea rebum. Stet clita kasd gubergren, no sea',
  'takimata sanctus est Lorem ipsum dolor sit',
  'amet. Lorem ipsum dolor sit amet, consetetur',
];

// null marks the space between two paragraphs
const leftPage = [
  [...vero, ...elitr, ending, null, ...duis, elitr[0]],
  [...elitr.slice(1), ...dolor, ...elitr, ending],
  [...duis, ...elitr, ...dolor],
];

const rightPage = [
  [...elitr, ending, null, ...duis, ...elitr],
  [...dolor, ...elitr, ending, null, ...duis.slice(0, 4)],
  [...duis.slice(4), ...elitr, ...dolor, ...elitr.slice(0, 4)],
];

function Page({ columns, right }) {
  return (
    <PageFrame $right={right}>
      {columns && (
        <Story>
          {columns.map((lines, c) => (
            <StoryColumn key={c}>
              {lines.map((line, i) => (line ? <Line key={i}>{line}</Line> : <Gap key={i} />))}
            </StoryColumn>
          ))}
        </Story>
      )}
      <Guides><i /><i /><i /><i /><i /><i /></Guides>
    </PageFrame>
  );
}

function Spread({ numbers, filled }) {
  return (
    <SpreadBox>
      <Paper />
      <Cover><CoverTitle>Affinity Publisher</CoverTitle></Cover>
      <Page columns={filled && leftPage} />
      <Page columns={filled && rightPage} right />
      <Folio>{numbers.map((n) => <span key={n}>{n}</span>)}</Folio>
      <Bleed />
      <Trim />
    </SpreadBox>
  );
}

/* ---------- rulers ---------- */

const PX_PER_MM = 2.07;
const ZERO_X = 59;
const ZERO_Y = -651;

const range = (from, to, step) => {
  const out = [];
  for (let v = from; v <= to; v += step) out.push(v);
  return out;
};

const tickLength = (mm) => {
  if (mm % 20 === 0) return 8;
  return mm % 10 === 0 ? 5 : 3;
};

function Rulers() {
  return (
    <>
      <TopRuler>
        <RulerDrawing>
          {range(-16, 612, 2).map((mm) => (
            <rect key={mm} x={Math.round(ZERO_X + mm * PX_PER_MM)} y={20 - tickLength(mm)} width="1" height={tickLength(mm)} fill="#e8e8e8" />
          ))}
          {range(0, 600, 20).map((mm) => (
            <text key={mm} x={Math.round(ZERO_X + mm * PX_PER_MM)} y="11">{mm}</text>
          ))}
          <rect x="832" y="0" width="1" height="20" fill="#fff" />
          <text x="11" y="15">mm</text>
        </RulerDrawing>
      </TopRuler>
      <SideRuler>
        <RulerDrawing>
          {range(316, 746, 2).map((mm) => (
            <rect key={mm} x={20 - tickLength(mm)} y={Math.round(ZERO_Y + mm * PX_PER_MM)} width={tickLength(mm)} height="1" fill="#e8e8e8" />
          ))}
          {range(320, 740, 20).map((mm) => (
            <text key={mm} transform={`translate(11 ${Math.round(ZERO_Y + mm * PX_PER_MM)}) rotate(-90)`}>{mm}</text>
          ))}
          <rect x="0" y="235" width="20" height="1" fill="#fff" />
        </RulerDrawing>
      </SideRuler>
    </>
  );
}

/* ---------- panels ---------- */

const menus = ['Datei', 'Bearbeiten', 'Dokument', 'Text', 'Tabelle', 'Ebene', 'Auswählen', 'Ansicht', 'Fenster', 'Hilfe'];

const noColor = 'linear-gradient(to top left, #fff 46%, #d0333f 46%, #d0333f 54%, #fff 54%)';

function TopBars() {
  return (
    <>
      <MenuBar>
        <Apple />
        <MenuItem $bold>Affinity Publisher</MenuItem>
        {menus.map((m) => <MenuItem key={m}>{m}</MenuItem>)}
      </MenuBar>
      <TitleBar>
        <Lights>
          <Light $color="#ee6a5f" aria-label="Schließen" />
          <Light $color="#e0bf4c" aria-label="Minimieren" />
          <Light $color="#6cc04a" aria-label="Vollbild" />
        </Lights>
        <span>Affinity Publisher - &lt;Unbenannt&gt; [Geändert] (48.5%)</span>
      </TitleBar>
      <Toolbar>
        <Personas>
          <Persona $active aria-label="Publisher"><PersonaPublisher /></Persona>
          <Persona aria-label="Designer"><PersonaDesigner /></Persona>
          <Persona aria-label="Photo"><PersonaPhoto /></Persona>
        </Personas>
        <Spacer />
        <Group>
          <ToolButton $width={37} $dim><FlowerUp /></ToolButton>
          <ToolButton><FlowerOff /></ToolButton>
        </Group>
        <Spacer />
        <Group>
          <ToolButton $width={37}><WrapPage /></ToolButton>
          <ToolButton $dim><Oval /></ToolButton>
          <ToolButton $dim><BoxX /></ToolButton>
        </Group>
        <Spacer />
        <Group>
          <ToolButton $width={37} $dim><PinIcon /></ToolButton>
          <ToolButton $dim><Dot /></ToolButton>
        </Group>
        <Spacer />
        <Cluster>
          <Group><ToolButton $width={39}><Preview /></ToolButton></Group>
          <Group><ToolButton $width={39}><Baseline /></ToolButton></Group>
          <Group>
            <ToolButton $width={37} $pressed><Magnet /></ToolButton>
            <ToolButton $width={16}><Down color="#eee" /></ToolButton>
          </Group>
        </Cluster>
        <Spacer />
        <Cluster>
          <Group>{[37, 35, 35, 37].map((w, k) => <ToolButton key={k} $width={w} $dim><Arrange kind={k} /></ToolButton>)}</Group>
          <Group><ToolButton $width={39} $dim><Align /></ToolButton></Group>
          <Group>{[37, 35, 35, 37].map((w, k) => <ToolButton key={k} $width={w} $dim><Flip kind={k} /></ToolButton>)}</Group>
          <Group>{[37, 35, 37].map((w, k) => <ToolButton key={k} $width={w}><Insert kind={k} /></ToolButton>)}</Group>
        </Cluster>
      </Toolbar>
      <ContextBar>
        <ContextLabel>Keine Auswahl</ContextLabel>
        <ContextButton $width={178}>Dokumenteinstellungen...</ContextButton>
        <ContextButton $width={168}>Layoutseite einrichten...</ContextButton>
        <ContextButton $width={120}>Einstellungen...</ContextButton>
      </ContextBar>
    </>
  );
}

function Tools() {
  return (
    <ToolStrip>
      {tools.map((tool, i) => (tool ? (
        <Tool key={tool.label} $active={tool.active} aria-label={tool.label}>
          {tool.wheel && <Wheel />}
          {tool.dropper && <Dropper />}
          {tool.icon && <Svg w={20}>{tool.icon}</Svg>}
        </Tool>
      ) : <Rule key={i} />))}
    </ToolStrip>
  );
}

function SwatchesDock() {
  return (
    <>
      <TabRow>
        <Grip />
        <Tab $active>Farbfelder</Tab>
        <Tab>Farbe</Tab>
        <MenuButton aria-label="Menü"><MenuIcon /></MenuButton>
      </TabRow>
      <ColorBox>
        <ColorWells />
        <label htmlFor="swatch-opacity">Deckkraft:</label>
        <SelectBox $width={60} $height={22}>
          <select id="swatch-opacity"><option>100 %</option></select>
          <Down />
        </SelectBox>
      </ColorBox>
      <SwatchPanel>
        <Recent>
          Zuletzt verwendet:
          <RecentStrip>
            <Swatch $fill="#1f2429" />
            <Swatch $fill="#d8325f" />
            <Swatch $fill="#eaeaea" />
          </RecentStrip>
        </Recent>
        <SourceRow>
          <SelectBox $width={139} $indent={24}>
            <select aria-label="Palette"><option>Dokument</option></select>
            <UpDown />
            <DocIcon />
          </SelectBox>
          <SwatchGrid />
          <SwatchGrid cut />
          <Strip>
            <Swatch $fill={noColor} />
            <Swatch $fill="#202020" />
            <Swatch $fill="#9b9b9b" />
            <Swatch $fill="#fff" />
          </Strip>
        </SourceRow>
        <SwatchList>
          <BigSwatch $fill="#1d232e" $global $active />
          <BigSwatch $fill="#414247" $global />
          <BigSwatch $fill="#66676a" $global />
          <BigSwatch $fill="#d8325f" $global />
          <BigSwatch $fill="#fff" />
        </SwatchList>
        <SearchBox>
          <Lens />
          <input type="search" aria-label="Farbfelder suchen" />
        </SearchBox>
      </SwatchPanel>
    </>
  );
}

const styles = [
  { mark: '¶', name: '[Kein Stil]' },
  { mark: '¶', name: 'Pagination', active: true, slab: true },
  { mark: '¶', name: 'Paragraph' },
  { mark: 'a', name: '[Kein Stil]', active: true, char: true },
];

function StylesDock() {
  return (
    <>
      <TabRow>
        <Grip />
        <Tab>Absatz</Tab>
        <Tab>Zeichen</Tab>
        <Tab $active>Textstile</Tab>
        <MenuButton aria-label="Menü"><MenuIcon /></MenuButton>
      </TabRow>
      <StyleHead>
        <Tri w={8} h={9} />
        <input defaultValue="Pagination" aria-label="Aktueller Stil" />
        <GlyphButton $ring>T</GlyphButton>
      </StyleHead>
      <StyleList>
        {styles.map((s, i) => (
          <StyleRow key={i} $active={s.active}>
            <StyleMark $char={s.char}>{s.mark}</StyleMark>
            <StyleName $slab={s.slab}>{s.name}</StyleName>
            <MenuButton aria-label="Stilmenü"><MenuIcon /></MenuButton>
          </StyleRow>
        ))}
      </StyleList>
      <DockFooter $height={26}>
        <GlyphButton><sup>+</sup>¶</GlyphButton>
        <GlyphButton><sup>+</sup>a</GlyphButton>
        <GlyphButton $italic><sup>+</sup>s</GlyphButton>
        <Spacer />
        <GlyphButton $ring>¶</GlyphButton>
        <GlyphButton $ring>a</GlyphButton>
        <Spacer />
        <Trash />
      </DockFooter>
    </>
  );
}

function DocumentArea() {
  return (
    <Column>
      <DocTabs>
        <DocTab>mehrseitige-broschuere [M]</DocTab>
        <DocTab $active>&lt;Unbenannt&gt; [M]</DocTab>
      </DocTabs>
      <Workspace>
        <Board>
          <Spread numbers={[4, 5]} filled />
          <Spread numbers={[6, 7]} filled />
          <Spread numbers={[8, 9]} />
        </Board>
        <Rulers />
        <ScrollThumb />
        <ScrollThumb $vertical />
        <Pointer width="12" height="17" viewBox="0 0 12 17">
          <path d="M1 1v12.500l3-2.800 2.200 5 2-1-2.200-4.700h4.200z" fill="#111" stroke="#fff" />
        </Pointer>
      </Workspace>
    </Column>
  );
}

function PageThumb({ mark, text }) {
  const blocks = [[3, 7], [12, 7], [22, 7], [34, 6], [43, 6], [52, 7]];
  return (
    <Svg w={61} h={22}>
      <path d="M30 3h3v2h-3z" fill={mark} />
      {text && blocks.map(([x, y]) => <path key={x} d={`M${x} ${y}h8v${20 - y}h-8z`} fill="#e6e6e8" />)}
      {text && <path d="M3 13h8M34 10h8M43 15h8" stroke="#fff" />}
    </Svg>
  );
}

function PageEntry({ name, state, single, mark, text }) {
  return (
    <PageRow>
      <ThumbRing $state={state}>
        <Thumb $single={single}>{!single && <PageThumb mark={mark} text={text} />}</Thumb>
      </ThumbRing>
      <PageName $selected={state === 'selected'}>{name}</PageName>
    </PageRow>
  );
}

function TransformDock() {
  return (
    <>
      <TabRow>
        <Grip />
        <Tab $active>Transformieren</Tab>
      </TabRow>
      <Transform>
        <Anchor><AnchorGrid /></Anchor>
        <Fields>
          <label htmlFor="tx">X:</label>
          <input id="tx" defaultValue="0 mm" />
          <label htmlFor="tb">B:</label>
          <input id="tb" defaultValue="0 mm" />
          <label htmlFor="ty">Y:</label>
          <input id="ty" defaultValue="0 mm" />
          <label htmlFor="th">H:</label>
          <input id="th" defaultValue="0 mm" />
          <FieldBreak />
          <label htmlFor="tr">R:</label>
          <SelectBox $width={60} $height={19} $dim>
            <select id="tr"><option>0 °</option></select>
            <Down color="#8a8a8a" />
          </SelectBox>
          <label htmlFor="tn">N:</label>
          <SelectBox $width={60} $height={19} $dim>
            <select id="tn"><option>0 °</option></select>
            <Down color="#8a8a8a" />
          </SelectBox>
        </Fields>
        <Chain><ChainIcon /></Chain>
      </Transform>
    </>
  );
}

function PagesDock() {
  return (
    <>
      <TabRow $flush>
        <Grip />
        <Tab $active>Seiten</Tab>
        <MenuButton aria-label="Menü"><MenuIcon /></MenuButton>
      </TabRow>
      <PagesBlock $height={114}>
        <SectionHead>
          <Tri dir="down" w={10} h={8} />
          Master-Seiten
          <SectionTools>
            <Sheet lines />
            <Sheet lines stacked color="#888" />
            <Trash color="#6c6c6c" />
          </SectionTools>
        </SectionHead>
        <PageList>
          <PageEntry name="Master A" mark="#9a9a9a" />
          <PageEntry name="Master B" mark="#d0708a" text />
        </PageList>
      </PagesBlock>
      <PagesBlock $height={269} $last>
        <SectionHead>
          <Tri dir="down" w={10} h={8} />
          Seiten
          <SectionTools>
            <SectionIcon />
            <span />
            <Sheet />
            <Sheet stacked />
            <Trash />
          </SectionTools>
        </SectionHead>
        <PageList>
          <PageEntry name="Seite 1" single />
          <PageEntry name="Seiten 2,3" state="current" mark="#9a9a9a" />
          <PageEntry name="Seiten 4,5" state="selected" mark="#c0708a" text />
          <PageEntry name="Seiten 6,7" state="selected" mark="#c0708a" text />
          <PageEntry name="Seiten 8,9" mark="#c0708a" />
        </PageList>
      </PagesBlock>
    </>
  );
}

function LayersDock() {
  return (
    <>
      <TabRow $flush>
        <Grip />
        <Tab $active>Ebenen</Tab>
        <MenuButton aria-label="Menü"><MenuIcon /></MenuButton>
      </TabRow>
      <LayerControls>
        <label htmlFor="layer-opacity">Deckkraft:</label>
        <SelectBox $width={48} $dim $indent={1}>
          <select id="layer-opacity"><option>100 %</option></select>
          <Down color="#8a8a8a" />
        </SelectBox>
        <SelectBox $width={129} $dim>
          <select aria-label="Mischmodus"><option>Normal</option></select>
          <UpDown color="#8a8a8a" />
        </SelectBox>
        <Gear />
        <Lock />
      </LayerControls>
      <Layers>
        {['layer-1', 'layer-2'].map((id) => (
          <Layer key={id}>
            <Tri color="#d8d8d8" w={8} />
            <LayerThumb />
            <label htmlFor={id}>(Master A)</label>
            <Tick type="checkbox" id={id} defaultChecked />
          </Layer>
        ))}
      </Layers>
      <DockFooter $height={23} $indent={7}>
        <Svg w={16} h={13}>
          <path d="M0 1h16l-8 3.500z" fill="#c8c8c8" />
          <path d="m0 4 8 3.500L16 4M0 7.500 8 11l8-3.500" stroke="#c8c8c8" strokeWidth="1.600" />
        </Svg>
        <Spacer />
        <Svg w={14} h={12}><path d="M0 0h14v12H0z" fill="#c8c8c8" /><circle cx="7" cy="6" r="4" fill="#333" /></Svg>
        <Svg w={14}><circle cx="7" cy="7" r="5.500" stroke="#c8c8c8" /><path d="M11 3 3 11a5.500 5.500 0 0 1 8-8z" fill="#c8c8c8" /></Svg>
        <GlyphButton $italic>fx</GlyphButton>
        <Spacer />
        <Svg w={11} h={13}><path d="M1 1h5l4 4v7H1zM6 1v4h4" stroke="#c8c8c8" strokeWidth="1.200" /></Svg>
        <Trash />
      </DockFooter>
    </>
  );
}

function Status() {
  return (
    <StatusBar>
      <NavButton $width={11} aria-label="Erste Seite"><Svg w={10}><path d="M1 0v10" stroke="#eee" strokeWidth="1.400" /><path d="M10 0v10L2.500 5z" fill="#eee" /></Svg></NavButton>
      <NavButton $width={29} aria-label="Vorherige Seite"><Tri dir="left" w={8} h={10} color="#eee" /></NavButton>
      <PageCount>2,3 von 9</PageCount>
      <NavButton $width={12} aria-label="Nächste Seite"><Tri w={8} h={10} color="#eee" /></NavButton>
      <NavButton $width={23} aria-label="Letzte Seite"><Svg w={10}><path d="M9 0v10" stroke="#eee" strokeWidth="1.400" /><path d="M0 0v10L7.500 5z" fill="#eee" /></Svg></NavButton>
      <NavButton $width={17} aria-label="Seiten"><Sheet lines /></NavButton>
      <Hint>
        <b>Ziehen</b> = Per Auswahlrahmen markieren. <b>Klick</b> auf Objekt = Objekt auswählen.
      </Hint>
    </StatusBar>
  );
}

function App() {
  return (
    <Window>
      <GlobalStyle />
      <TopBars />
      <Body>
        <LeftDock>
          <Tools />
          <Column>
            <SwatchesDock />
            <StylesDock />
          </Column>
        </LeftDock>
        <DocumentArea />
        <RightDock>
          <TransformDock />
          <PagesDock />
          <LayersDock />
        </RightDock>
      </Body>
      <Status />
    </Window>
  );
}

export default App;
